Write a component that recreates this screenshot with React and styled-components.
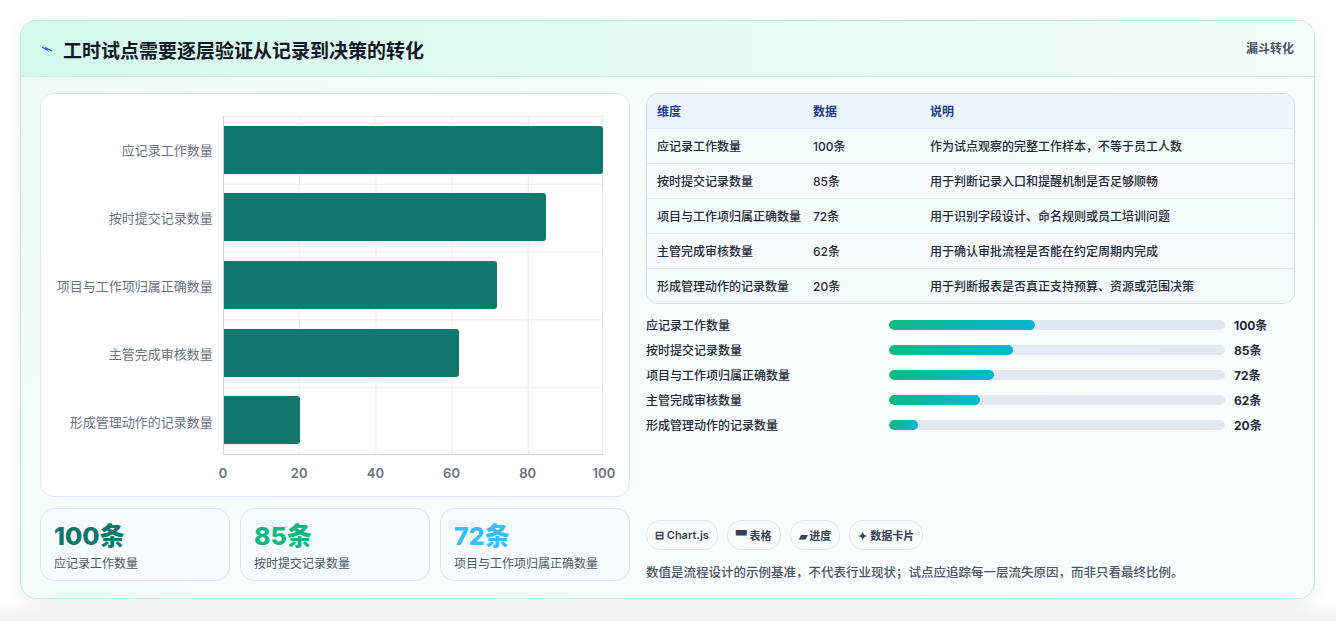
import React from "react";
import styled, { createGlobalStyle } from "styled-components";

const G = createGlobalStyle`
  body{margin:0;background:#f3f4f6;font-family:Inter,"Noto Sans CJK SC",sans-serif;}
`;
const Page = styled.div`width:1336px;height:621px;background:linear-gradient(#fff 0,#fff 600px,#f1f1f1 100%);padding:20px 21px 0 20px;box-sizing:border-box;`;
const Card = styled.div`width:1295px;height:579px;border:1px solid #bdeee0;border-radius:16px;box-sizing:border-box;overflow:hidden;
  background:linear-gradient(135deg,#eefcf6 0%,#f6fdfb 40%,#fbfefe 100%);box-shadow:0 6px 18px rgba(0,0,0,.06);display:flex;flex-direction:column;`;
const Header = styled.div`height:56px;box-sizing:border-box;border-bottom:1px solid #c8f1e6;background:linear-gradient(90deg,#d3f8ec,#eafcf6 60%,#f3fdf9);
  display:flex;justify-content:space-between;padding:0 20px;`;
const Title = styled.h1`margin:0;font-size:19px;font-weight:700;color:#111827;display:flex;align-items:center;gap:10px;height:56px;`;
const Tag = styled.span`font-size:12px;font-weight:700;color:#4b5563;padding-top:18px;`;
const Body = styled.div`flex:1;display:flex;gap:16px;padding:16px 19px 19px 19px;`;
const Left = styled.div`width:590px;display:flex;flex-direction:column;gap:11px;`;
const ChartPanel = styled.div`height:404px;box-sizing:border-box;background:#fff;border:1px solid #e3e8f0;border-radius:14px;padding:22px 26px 0 0;display:flex;flex-direction:column;`;
const ChartRow = styled.div`display:flex;`;
const Labels = styled.div`width:182px;display:flex;flex-direction:column;`;
const Label = styled.div`height:67.8px;display:flex;align-items:center;justify-content:flex-end;padding-right:10px;font-size:13px;color:#6b7280;`;
const Plot = styled.div`width:381px;height:339px;border-left:1px solid #d1d5db;border-bottom:1px solid #d1d5db;box-sizing:border-box;display:flex;flex-direction:column;
  background-image:linear-gradient(to right,#e8eaf0 1px,transparent 1px),linear-gradient(to bottom,#e8eaf0 1px,transparent 1px);
  background-size:76.2px 100%,100% 67.8px;background-position:-1px 0,0 0;box-shadow:inset -1px 0 #e8eaf0;`;
const BarSlot = styled.div`height:67.8px;display:flex;align-items:center;`;
const Bar = styled.div`height:48px;background:#11766e;border-radius:0 3px 3px 0;`;
const Ticks = styled.div`display:flex;margin-left:182px;width:381px;justify-content:space-between;padding-top:10px;`;
const Tick = styled.span`font-size:13px;font-weight:600;color:#6b7280;width:0;display:flex;justify-content:center;`;
const Stats = styled.div`display:grid;grid-template-columns:repeat(3,1fr);gap:10px;`;
const Stat = styled.div`height:73px;box-sizing:border-box;border:1px solid #dbe6f2;border-radius:14px;background:#f8fbfe;padding:12px 13px;`;
const StatVal = styled.div`font-size:25px;font-weight:800;color:${p=>p.c};line-height:30px;`;
const StatLab = styled.div`font-size:12px;color:#4b5563;margin-top:3px;`;
const Right = styled.div`flex:1;display:flex;flex-direction:column;`;
const Table = styled.div`border:1px solid #d3dcea;border-radius:12px;overflow:hidden;background:#fff;`;
const Row = styled.div`display:grid;grid-template-columns:156px 117px 1fr;padding:0 10px;min-height:34px;box-sizing:border-box;align-items:start;
  border-top:${p=>p.head?"none":"1px solid #e3e8f0"};background:${p=>p.head?"#eff5fe":p.alt?"#f9fafd":"#f4fcf9"};
  font-size:12px;font-weight:${p=>p.head?700:500};color:${p=>p.head?"#1e3a8a":"#1f2937"};`;
const Cell = styled.div`padding:9px 10px 8px 0;line-height:17px;`;
const Bars = styled.div`display:flex;flex-direction:column;gap:8px;margin-top:12px;`;
const PRow = styled.div`display:flex;align-items:center;height:17px;`;
const PLab = styled.div`width:243px;font-size:12px;font-weight:500;color:#1f2937;`;
const Track = styled.div`width:336px;height:10px;border-radius:5px;background:#e2e8f0;overflow:hidden;`;
const Fill = styled.div`height:100%;border-radius:5px;background:linear-gradient(90deg,#10b981,#06b6d4);`;
const PVal = styled.div`margin-left:9px;font-size:12px;font-weight:700;color:#1f2937;`;
const Chips = styled.div`display:flex;gap:9px;margin-top:auto;`;
const Chip = styled.span`font-size:11px;font-weight:600;color:#374151;border:1px solid #e2e8f0;border-radius:14px;background:#fafbfc;padding:6px 8px;display:inline-flex;align-items:center;gap:3px;`;
const Note = styled.p`margin:12px 0 0;font-size:12.5px;font-weight:500;color:#4b5563;`;

const data=[["应记录工作数量",100,"作为试点观察的完整工作样本，不等于员工人数"],["按时提交记录数量",85,"用于判断记录入口和提醒机制是否足够顺畅"],["项目与工作项归属正确数量",72,"用于识别字段设计、命名规则或员工培训问题"],["主管完成审核数量",62,"用于确认审批流程是否能在约定周期内完成"],["形成管理动作的记录数量",20,"用于判断报表是否真正支持预算、资源或范围决策"]];

export default function App(){
  return <Page><G/><Card>
    <Header><Title><svg width="12" height="8" viewBox="0 0 12 8"><path d="M1 2 L6 5 L5 3 L11 6" stroke="#2563eb" strokeWidth="1.3" fill="none"/></svg>工时试点需要逐层验证从记录到决策的转化</Title><Tag>漏斗转化</Tag></Header>
    <Body>
      <Left>
        <ChartPanel>
          <ChartRow>
            <Labels>{data.map(d=><Label key={d[0]}>{d[0]}</Label>)}</Labels>
            <Plot>{data.map(d=><BarSlot key={d[0]}><Bar style={{width:`${d[1]}%`}}/></BarSlot>)}</Plot>
          </ChartRow>
          <Ticks>{[0,20,40,60,80,100].map(t=><Tick key={t}>{t}</Tick>)}</Ticks>
        </ChartPanel>
        <Stats>
          <Stat><StatVal c="#0f766e">100条</StatVal><StatLab>应记录工作数量</StatLab></Stat>
          <Stat><StatVal c="#10b981">85条</StatVal><StatLab>按时提交记录数量</StatLab></Stat>
          <Stat><StatVal c="#38bdf8">72条</StatVal><StatLab>项目与工作项归属正确数量</StatLab></Stat>
        </Stats>
      </Left>
      <Right>
        <Table>
          <Row head><Cell>维度</Cell><Cell>数据</Cell><Cell>说明</Cell></Row>
          {data.map((d,i)=><Row key={d[0]} alt={i%2===1}><Cell>{d[0]}</Cell><Cell>{d[1]}条</Cell><Cell>{d[2]}</Cell></Row>)}
        </Table>
        <Bars>{data.map(d=><PRow key={d[0]}><PLab>{d[0]}</PLab><Track><Fill style={{width:`${d[1]*0.435}%`}}/></Track><PVal>{d[1]}条</PVal></PRow>)}</Bars>
        <Chips><Chip>⊟ Chart.js</Chip><Chip>▀ 表格</Chip><Chip>▰ 进度</Chip><Chip>✦ 数据卡片</Chip></Chips>
        <Note>数值是流程设计的示例基准，不代表行业现状；试点应追踪每一层流失原因，而非只看最终比例。</Note>
      </Right>
    </Body>
  </Card></Page>;
}
